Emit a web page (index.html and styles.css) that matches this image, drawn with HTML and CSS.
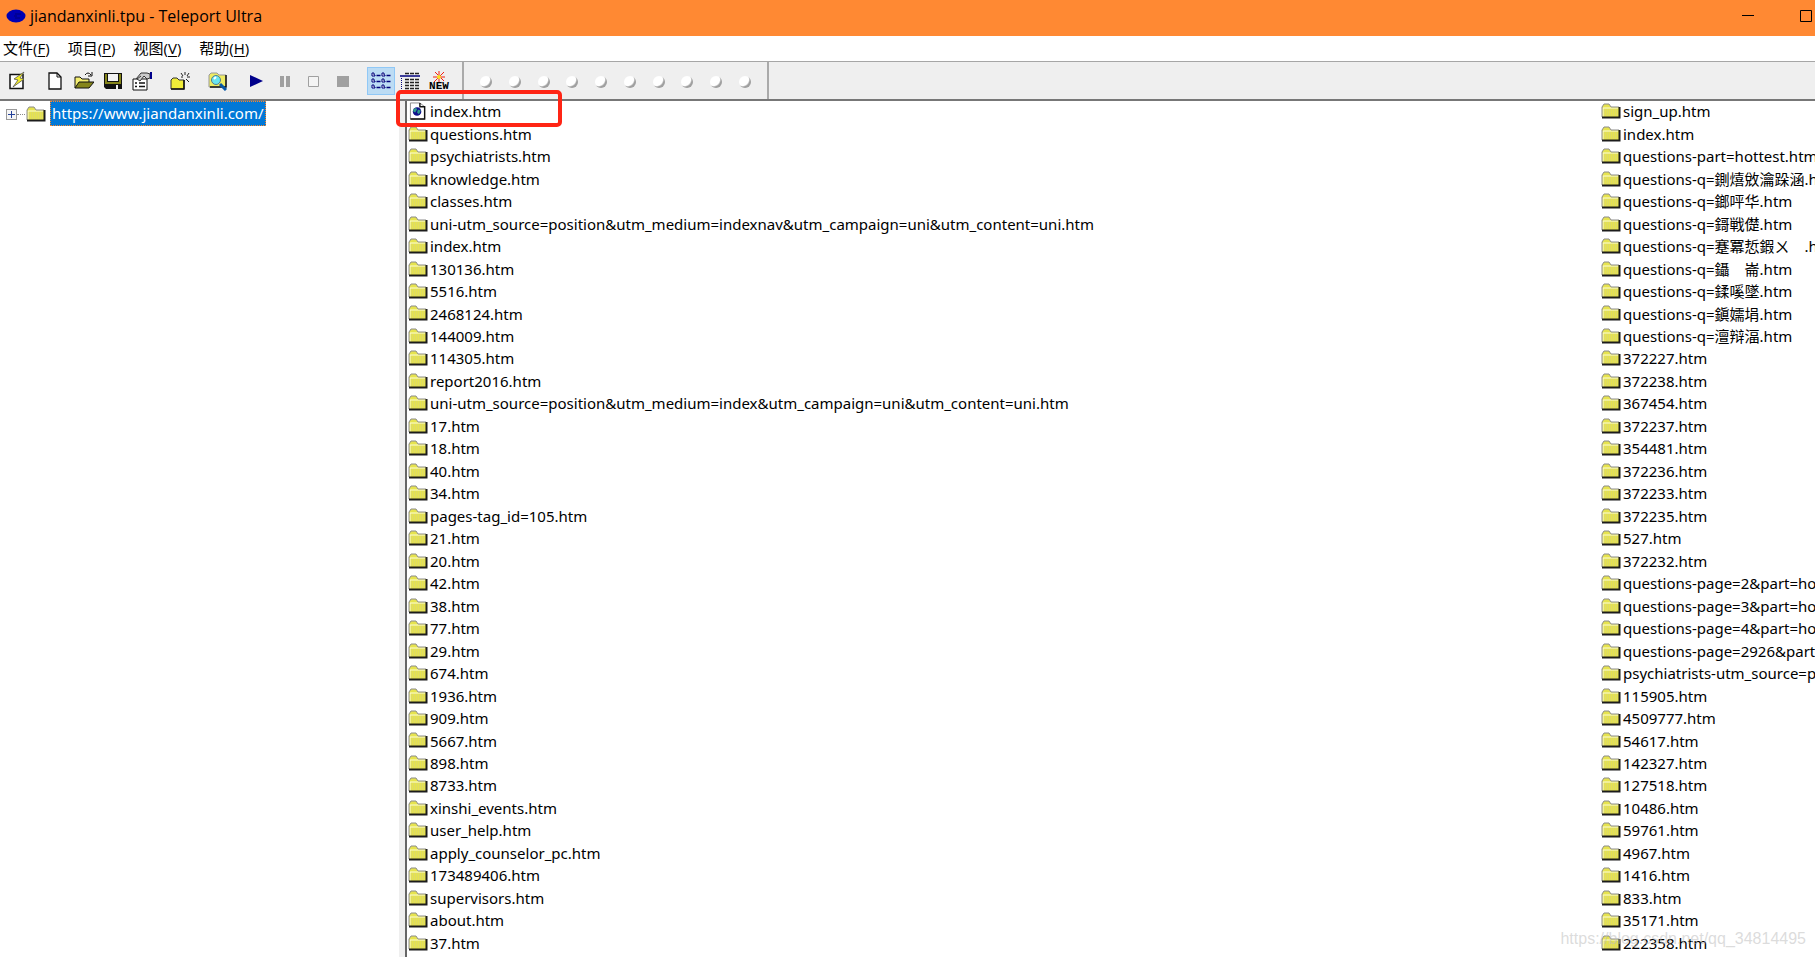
FILE: index.html
```html
<!DOCTYPE html>
<html lang="zh-CN">
<head>
<meta charset="utf-8">
<title>jiandanxinli.tpu - Teleport Ultra</title>
<link rel="stylesheet" href="styles.css">
</head>
<body>
<svg class="defs" aria-hidden="true">
  <symbol id="folder" viewBox="0 0 20 18">
    <path d="M1 15V5l2-3h5l2 3h8v10z" fill="#e6e34f"/>
    <path d="M3 7h14M3 9h14M3 11h14M3 13h14" stroke="#d4d27c" stroke-dasharray="1 1"/>
    <path d="M2 15V6h15" fill="none" stroke="#ffffd8"/>
    <path d="M1 15V5l2-3h5l2 3h8" fill="none" stroke="#8c8c8c"/>
    <path d="M1 15.500h17.500V5" fill="none" stroke="#1c1c1c" stroke-width="2"/>
  </symbol>
  <symbol id="page" viewBox="0 0 20 19">
    <path d="M2 1h10l5 4v13H2z" fill="#fff" stroke="#888"/>
    <path d="M12 1v4h5v13H2" fill="none" stroke="#111" stroke-width="1.500"/>
    <circle cx="9" cy="10" r="4.500" fill="#10108c"/>
    <path d="M5 8l3-2 1 2-2 3-2-1zM10 8l3 1-2 4-2-2z" fill="#2f9c8c"/>
  </symbol>
</svg>
<header class="titlebar">
  <svg class="app-icon" viewBox="0 0 20 14"><ellipse cx="10" cy="7" rx="9.500" ry="6.500" fill="#0000b4"/><path d="M9 5h6M8 7h3M9 9h5" stroke="#00007a" fill="none"/></svg>
  <h1>jiandanxinli.tpu - Teleport Ultra</h1>
  <div class="window-buttons">
    <button aria-label="最小化"><svg viewBox="0 0 12 12"><path d="M0 5.500h12" stroke="#000"/></svg></button>
    <button aria-label="最大化"><svg viewBox="0 0 12 12"><path d="M.5.5h11v11H.5z" stroke="#000" fill="none"/></svg></button>
  </div>
</header>
<nav class="menu">
  <button>文件(<u>F</u>)</button><button>项目(<u>P</u>)</button><button>视图(<u>V</u>)</button><button>帮助(<u>H</u>)</button>
</nav>
<div class="toolbar" role="toolbar">
  <div class="group">
    <button aria-label="新建向导"><svg viewBox="0 0 20 20"><path d="M3 3.500h13v14H3z" fill="#fff" stroke="#111" stroke-width="1.500"/><path d="M17 1l-10 7 4 1-5 7 11-8-4-1z" fill="#f4ee28" stroke="#555" stroke-width=".8"/></svg></button>
    <button class="gap" aria-label="新建"><svg viewBox="0 0 20 20"><path d="M4 2h8l4 4v12H4z" fill="#fff" stroke="#111" stroke-width="1.300"/><path d="M12 2v4h4" fill="none" stroke="#111"/></svg></button>
    <button aria-label="打开"><svg viewBox="0 0 20 20"><path d="M1 17V6h5l2 2h7v3" fill="#f4ee70" stroke="#111"/><path d="M1 17l4-6h15l-5 6z" fill="#85851a" stroke="#111"/><path d="M11 4q3-4 6 0m1-3v4h-4" fill="none" stroke="#111"/></svg></button>
    <button aria-label="保存"><svg viewBox="0 0 20 20"><path d="M1 2h18v16H3l-2-2z" fill="#111"/><path d="M2 3h2v8h12V3h2v10H2z" fill="#85851a"/><path d="M5 3h10v7H5zM13 14h2v4h-2z" fill="#f2f2f2"/></svg></button>
    <button aria-label="属性"><svg viewBox="0 0 20 20"><path d="M1 8h14v11H1z" fill="#fff" stroke="#111"/><path d="M3 12h2m2 0h6M3 15.500h2m2 0h6" stroke="#111" stroke-width="1.500"/><path d="M4 8l5-6h6l3 1v4l-3 1-3-3-4 5-3-2 4-3" fill="#ccc" stroke="#333"/><path d="M18 1h2v7h-2z" fill="#00008b"/></svg></button>
    <button class="gap" aria-label="添加地址"><svg viewBox="0 0 20 20"><path d="M1 18V9l2-2h4l2 2h5v9z" fill="#f0ec38" stroke="#333"/><path d="M1 18h13V9" fill="none" stroke="#111" stroke-width="1.500"/><path d="M15 1v3m-4-2l2 3m6-3l-2 3m-6 1h2m4 0h3m-4 2l3 3m-5-2v2" stroke="#222" fill="none"/></svg></button>
    <button class="gap" aria-label="查找"><svg viewBox="0 0 20 20"><path d="M1 15V4l2-2h6l2 2h7v12H1z" fill="#efec62" stroke="#999"/><path d="M18 4v12H2" fill="none" stroke="#111" stroke-width="1.500"/><path d="M12 13l6 6" stroke="#0758a7" stroke-width="3"/><circle cx="8" cy="9" r="4.500" fill="#69e5ef" stroke="#557b8b"/><path d="M6 8l2-2" stroke="#fff" stroke-width="2"/></svg></button>
    <button class="gap" aria-label="开始"><svg viewBox="0 0 20 20"><path d="M4 4l13 6-13 6z" fill="#00008b"/></svg></button>
    <button aria-label="暂停"><svg viewBox="0 0 20 20"><path d="M5 5h4v11H5zM11 5h4v11h-4z" fill="#a0a0a0"/></svg></button>
    <button aria-label="单步"><svg viewBox="0 0 20 20"><path d="M4.500 5.500h10v10h-10z" fill="#f4f4f4" stroke="#a0a0a0"/></svg></button>
    <button aria-label="停止"><svg viewBox="0 0 20 20"><path d="M4 5h12v11H4z" fill="#a0a0a0"/></svg></button>
    <button class="gap active" aria-label="列表"><svg viewBox="0 0 20 20"><path d="M1 2h2v2h1v1H1zM11 2h2v2h1v1h-3zM1 8h2v2h1v1H1zM11 8h2v2h1v1h-3zM1 14h2v2h1v1H1zM11 14h2v2h1v1h-3z" fill="#fff" stroke="#00007b"/><path d="M5.500 4.500h4m6 0h4M5.500 10.500h4m6 0h4M5.500 16.500h4m6 0h4" stroke="#00007b" stroke-width="1.400"/></svg></button>
    <button aria-label="详细信息"><svg viewBox="0 0 20 20"><path d="M5 2.500h4m1 0h4m1 0h4M5 8.500h4m1 0h4m1 0h4M5 11.500h4m1 0h4m1 0h4M5 14.500h4m1 0h4m1 0h4M5 17.500h4m1 0h4m1 0h4" stroke="#222" stroke-width="1.500"/><path d="M0 5h20" stroke="#00007b" stroke-width="1.500"/><path d="M1.500 7v12" stroke="#00007b" stroke-dasharray="1 1"/></svg></button>
    <button class="new" aria-label="新文件"><svg viewBox="0 0 20 11"><path d="M10 0v11M6 1l9 9M15 1L5 11M4 6h12" stroke="#f02012"/><circle cx="10" cy="6" r="2" fill="#f8e51d"/></svg><b>NEW</b></button>
  </div>
  <div class="lights"><i></i><i></i><i></i><i></i><i></i><i></i><i></i><i></i><i></i><i></i></div>
</div>
<main class="workspace">
  <aside class="tree">
    <button class="expand" aria-label="展开"></button><span class="branch"></span><svg class="icon"><use href="#folder"/></svg><a href="#">https://www.jiandanxinli.com/</a>
  </aside>
  <section class="files" id="files"></section>
  <div class="highlight"></div>
</main>
<div class="watermark">https://blog.csdn.net/qq_34814495</div>
<script src="files.js"></script>
</body>
</html>
```
FILE: styles.css
```css
* { box-sizing: border-box; }
body { margin: 0; height: 100vh; display: flex; flex-direction: column; overflow: hidden; background: #fff; color: #000; font: 15px/22px "Noto Sans", "Noto Sans CJK SC", sans-serif; }
button { margin: 0; padding: 0; border: 0; background: none; font: inherit; color: inherit; }
.defs { display: none; }
.titlebar { flex: none; height: 36px; display: flex; align-items: center; padding: 0 3px 4px 6px; background: #ff8933; }
.app-icon { width: 20px; height: 14px; margin-right: 4px; }
h1 { flex: 1; margin: 0; font: 16px/22px "Open Sans", sans-serif; }
.window-buttons { display: flex; gap: 46px; }
.window-buttons button, .window-buttons svg { display: block; width: 12px; height: 12px; }
.menu { flex: none; height: 25px; display: flex; align-items: center; gap: 18px; padding: 0 3px 2px; font: 15px/22px "Open Sans", "Noto Sans CJK SC", sans-serif; }
.menu u { text-underline-offset: 2px; }
.toolbar { flex: none; height: 40px; display: flex; background: #efefef; border-top: 1px solid #a6a6a6; border-bottom: 2px solid #777; }
.group { display: flex; align-items: center; gap: 1px; width: 464px; padding-left: 3px; border-right: 2px solid #aaa; }
.toolbar button { flex: none; width: 28px; height: 28px; display: flex; flex-direction: column; align-items: center; justify-content: center; }
.toolbar svg { width: 20px; height: 20px; }
.toolbar .gap { margin-left: 9px; }
.toolbar .active { background: #bcdcf4; border: 1px solid #90c8f6; }
.toolbar .new svg { height: 11px; }
.new b { font: bold 11px/9px "Liberation Mono", monospace; }
.lights { display: flex; align-items: center; justify-content: space-between; width: 305px; padding: 3px 16px 0; border-right: 2px solid #aaa; }
.lights i { width: 12px; height: 12px; border-radius: 50%; background: radial-gradient(circle at 30% 30%, #fff 50%, #a0a0a0 62%); }
.workspace { flex: 1; min-height: 0; display: grid; grid-template-columns: 405px 1fr; position: relative; }
.tree { display: flex; align-items: flex-start; padding-left: 6px; border-right: 6px solid #efefef; }
.tree .expand { width: 11px; height: 11px; margin-top: 8px; border: 1px solid #999; background: linear-gradient(#24419a, #24419a) center/7px 1px no-repeat, linear-gradient(#24419a, #24419a) center/1px 7px no-repeat, #f5f5f5; }
.branch { width: 8px; margin-top: 13px; border-top: 1px dotted #888; }
.icon { flex: none; width: 20px; height: 18px; }
.tree .icon { margin: 4px 4px 0 1px; }
.tree a { padding: 0 1px; line-height: 23px; background: #0078d7; color: #fff; border: 1px dotted #ff8728; text-decoration: none; }
.files { display: grid; grid-template-columns: 1193px 1fr; grid-template-rows: repeat(38, 1fr); grid-auto-flow: column; overflow: hidden; padding-bottom: 2px; border-left: 2px solid #666; }
.file { min-width: 0; min-height: 0; display: flex; align-items: center; white-space: pre; padding: 0 0 2px 1px; }
.file .icon { margin-right: 2px; }
.highlight { position: absolute; left: 396px; top: -11px; width: 166px; height: 37px; border: 4px solid #ff2515; border-radius: 5px; }
.watermark { position: absolute; right: 9px; bottom: 7px; font: 16px/22px "Liberation Sans", sans-serif; color: rgba(190,190,190,.55); }
```
FILE: files.js
```js
const columns = [
  ["index.htm", "questions.htm", "psychiatrists.htm", "knowledge.htm", "classes.htm", "uni-utm_source=position&utm_medium=indexnav&utm_campaign=uni&utm_content=uni.htm", "index.htm", "130136.htm", "5516.htm", "2468124.htm", "144009.htm", "114305.htm", "report2016.htm", "uni-utm_source=position&utm_medium=index&utm_campaign=uni&utm_content=uni.htm", "17.htm", "18.htm", "40.htm", "34.htm", "pages-tag_id=105.htm", "21.htm", "20.htm", "42.htm", "38.htm", "77.htm", "29.htm", "674.htm", "1936.htm", "909.htm", "5667.htm", "898.htm", "8733.htm", "xinshi_events.htm", "user_help.htm", "apply_counselor_pc.htm", "173489406.htm", "supervisors.htm", "about.htm", "37.htm"],
  ["sign_up.htm", "index.htm", "questions-part=hottest.htm", "questions-q=鍘熺敓瀹跺涵.htm", "questions-q=鎯呯华.htm", "questions-q=鎶戦儊.htm", "questions-q=蹇冪悊鍜ㄨ\u3000.htm", "questions-q=鑷\u3000崙.htm", "questions-q=鍒嗘墜.htm", "questions-q=鎭嬬埍.htm", "questions-q=澶辩湢.htm", "372227.htm", "372238.htm", "367454.htm", "372237.htm", "354481.htm", "372236.htm", "372233.htm", "372235.htm", "527.htm", "372232.htm", "questions-page=2&part=hottest.htm", "questions-page=3&part=hottest.htm", "questions-page=4&part=hottest.htm", "questions-page=2926&part=hottest.htm", "psychiatrists-utm_source=position.htm", "115905.htm", "4509777.htm", "54617.htm", "142327.htm", "127518.htm", "10486.htm", "59761.htm", "4967.htm", "1416.htm", "833.htm", "35171.htm", "222358.htm"]
];
const files = document.getElementById("files");
columns.forEach((names, col) => names.forEach((name, row) => {
  const item = document.createElement("div");
  item.className = "file";
  item.innerHTML = `<svg class="icon"><use href="#${col + row === 0 ? "page" : "folder"}"/></svg>`;
  const label = document.createElement("span");
  label.textContent = name;
  item.append(label);
  files.append(item);
}));
```
